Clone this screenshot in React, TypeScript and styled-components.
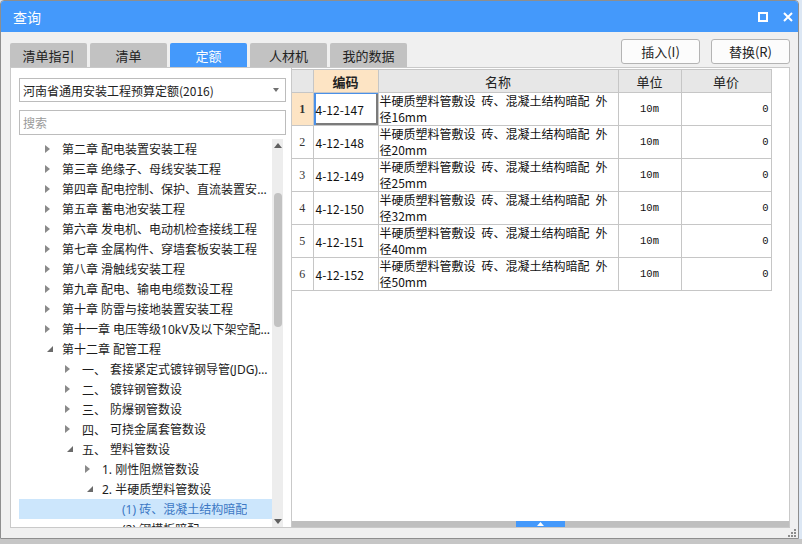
import React from 'react';
import styled, {createGlobalStyle, css} from 'styled-components';

type TreeItemType = {
    level: number
    text: string
    num?: string
    state?: 'open' | 'closed' | 'leaf'
    selected?: boolean
}

type RowType = {
    id: number
    code: string
    size: string
}

const treeData: TreeItemType[] = [
    {level: 0, text: '第二章 配电装置安装工程', state: 'closed'},
    {level: 0, text: '第三章 绝缘子、母线安装工程', state: 'closed'},
    {level: 0, text: '第四章 配电控制、保护、直流装置安装工程', state: 'closed'},
    {level: 0, text: '第五章 蓄电池安装工程', state: 'closed'},
    {level: 0, text: '第六章 发电机、电动机检查接线工程', state: 'closed'},
    {level: 0, text: '第七章 金属构件、穿墙套板安装工程', state: 'closed'},
    {level: 0, text: '第八章 滑触线安装工程', state: 'closed'},
    {level: 0, text: '第九章 配电、输电电缆数设工程', state: 'closed'},
    {level: 0, text: '第十章 防雷与接地装置安装工程', state: 'closed'},
    {level: 0, text: '第十一章 电压等级10kV及以下架空配电线路工程', state: 'closed'},
    {level: 0, text: '第十二章 配管工程', state: 'open'},
    {level: 1, num: '一、', text: '套接紧定式镀锌钢导管(JDG)数设', state: 'closed'},
    {level: 1, num: '二、', text: '镀锌钢管数设', state: 'closed'},
    {level: 1, num: '三、', text: '防爆钢管数设', state: 'closed'},
    {level: 1, num: '四、', text: '可挠金属套管数设', state: 'closed'},
    {level: 1, num: '五、', text: '塑料管数设', state: 'open'},
    {level: 2, text: '1. 刚性阻燃管数设', state: 'closed'},
    {level: 2, text: '2. 半硬质塑料管数设', state: 'open'},
    {level: 3, text: '(1) 砖、混凝土结构暗配', state: 'leaf', selected: true},
    {level: 3, text: '(2) 钢模板暗配', state: 'leaf'},
]

const rows: RowType[] = [
    {id: 1, code: '4-12-147', size: '16mm'},
    {id: 2, code: '4-12-148', size: '20mm'},
    {id: 3, code: '4-12-149', size: '25mm'},
    {id: 4, code: '4-12-150', size: '32mm'},
    {id: 5, code: '4-12-151', size: '40mm'},
    {id: 6, code: '4-12-152', size: '50mm'},
]

const tabs = ['清单指引', '清单', '定额', '人材机', '我的数据']

const TreeIcon = ({state}: { state?: TreeItemType['state'] }) => {
    if (state === 'open') {
        return (
            <svg width="6" height="6" viewBox="0 0 6 6" style={{marginLeft: 2}}>
                <polygon points="6,0 6,6 0,6" fill="#6b6b6b"/>
            </svg>
        )
    }
    if (state === 'closed') {
        return (
            <svg width="5" height="8" viewBox="0 0 5 8">
                <polygon points="0,0 5,4 0,8" fill="#8a8a8a"/>
            </svg>
        )
    }
    return null
}

export default function App() {
    return (
        <Page>
            <GlobalStyle/>
            <Window>
                <TitleBar>
                    <span>查询</span>
                    <TitleIcons>
                        <MaxIcon/>
                        <svg width="10" height="10" viewBox="0 0 10 10">
                            <path d="M1 1 L9 9 M9 1 L1 9" stroke="#fff" strokeWidth="2"/>
                        </svg>
                    </TitleIcons>
                </TitleBar>

                <Toolbar>
                    <Tabs>
                        {tabs.map(t => <Tab key={t} active={t === '定额'}>{t}</Tab>)}
                    </Tabs>
                    <Buttons>
                        <Button>插入(I)</Button>
                        <Button>替换(R)</Button>
                    </Buttons>
                </Toolbar>

                <Content>
                    <LeftPanel>
                        <Select>
                            <span>河南省通用安装工程预算定额(2016)</span>
                            <svg width="6" height="4" viewBox="0 0 6 4">
                                <polygon points="0,0 6,0 3,4" fill="#707070"/>
                            </svg>
                        </Select>
                        <Search placeholder="搜索"/>
                        <TreeWrap>
                            <TreeList>
                                {treeData.map((el, i) => (
                                    <TreeRow key={i} level={el.level} selected={!!el.selected}>
                                        <IconBox><TreeIcon state={el.state}/></IconBox>
                                        {el.num && <Num>{el.num}</Num>}
                                        <TreeText>{el.text}</TreeText>
                                    </TreeRow>
                                ))}
                            </TreeList>
                            <VScroll>
                                <ArrowBox>
                                    <svg width="8" height="5" viewBox="0 0 8 5">
                                        <polygon points="0,5 8,5 4,0" fill="#606060"/>
                                    </svg>
                                </ArrowBox>
                                <Track>
                                    <Thumb/>
                                </Track>
                                <ArrowBox>
                                    <svg width="8" height="5" viewBox="0 0 8 5">
                                        <polygon points="0,0 8,0 4,5" fill="#606060"/>
                                    </svg>
                                </ArrowBox>
                            </VScroll>
                        </TreeWrap>
                    </LeftPanel>

                    <RightPanel>
                        <TableArea>
                            <Grid>
                                <colgroup>
                                    <col style={{width: 21}}/>
                                    <col style={{width: 65}}/>
                                    <col style={{width: 240}}/>
                                    <col style={{width: 63}}/>
                                    <col style={{width: 90}}/>
                                </colgroup>
                                <thead>
                                <tr>
                                    <Th/>
                                    <Th hl>编码</Th>
                                    <Th>名称</Th>
                                    <Th>单位</Th>
                                    <Th>单价</Th>
                                </tr>
                                </thead>
                                <tbody>
                                {rows.map(el => (
                                    <tr key={el.id}>
                                        <NumTd hl={el.id === 1}>{el.id}</NumTd>
                                        <CodeTd focus={el.id === 1}>{el.code}</CodeTd>
                                        <NameTd>半硬质塑料管敷设{'\u2002'}砖、混凝土结构暗配{'\u2002'}外径{el.size}</NameTd>
                                        <Td align="center">10m</Td>
                                        <Td align="right">0</Td>
                                    </tr>
                                ))}
                                </tbody>
                            </Grid>
                        </TableArea>
                        <HScroll>
                            <Handle>
                                <svg width="7" height="4" viewBox="0 0 7 4">
                                    <polygon points="0,4 7,4 3.5,0" fill="#fff"/>
                                </svg>
                            </Handle>
                        </HScroll>
                    </RightPanel>
                </Content>

                <Footer>
                    <svg width="8" height="8" viewBox="0 0 8 8">
                        <rect x="6" y="0" width="2" height="2" fill="#8c8c8c"/>
                        <rect x="3" y="3" width="2" height="2" fill="#8c8c8c"/>
                        <rect x="6" y="3" width="2" height="2" fill="#8c8c8c"/>
                        <rect x="0" y="6" width="2" height="2" fill="#8c8c8c"/>
                        <rect x="3" y="6" width="2" height="2" fill="#8c8c8c"/>
                        <rect x="6" y="6" width="2" height="2" fill="#8c8c8c"/>
                    </svg>
                </Footer>
            </Window>
            <BottomStrip/>
        </Page>
    );
}

const GlobalStyle = createGlobalStyle`
  html, body {
    margin: 0;
    padding: 0;
    overflow: hidden;
  }

  body {
    background: #dce7f4;
    font-family: "Noto Sans CJK SC", "Noto Sans", sans-serif;
    font-size: 12px;
    color: #222;
  }
`

const Page = styled.div`
  width: 802px;
  height: 544px;
  display: flex;
  flex-direction: column;
`

const Window = styled.div`
  box-sizing: border-box;
  width: 799px;
  height: 539px;
  border: 1px solid #8e8e8e;
  border-radius: 4px 4px 0 0;
  background: #f0f0f0;
  display: flex;
  flex-direction: column;
  overflow: hidden;
`

const BottomStrip = styled.div`
  flex: 1;
  background: #c6c6c6;
`

const TitleBar = styled.div`
  height: 31px;
  flex-shrink: 0;
  display: flex;
  align-items: center;
  justify-content: space-between;
  padding: 0 5px 0 12px;
  background: #4499fb;
  color: #fff;
  font-size: 14px;
`

const TitleIcons = styled.div`
  display: flex;
  align-items: center;
  gap: 15px;
`

const MaxIcon = styled.div`
  box-sizing: border-box;
  width: 10px;
  height: 10px;
  border: 2px solid #fff;
`

const Toolbar = styled.div`
  height: 35px;
  flex-shrink: 0;
  display: flex;
  align-items: flex-end;
  justify-content: space-between;
  padding: 0 8px 0 9px;
`

const Tabs = styled.div`
  display: flex;
  gap: 3px;
`

const Tab = styled.div<{ active: boolean }>`
  width: 77px;
  height: 24px;
  display: flex;
  align-items: center;
  justify-content: center;
  border-radius: 2px 2px 0 0;
  background: #c2c2c2;
  color: #222;
  font-size: 13px;
  ${props => props.active && css`
    background: #4499fb;
    color: #fff;
  `}
`

const Buttons = styled.div`
  display: flex;
  gap: 11px;
  padding-bottom: 3px;
`

const Button = styled.div`
  box-sizing: border-box;
  width: 79px;
  height: 25px;
  display: flex;
  align-items: center;
  justify-content: center;
  background: #fcfcfc;
  border: 1px solid #b4b4b4;
  border-radius: 3px;
  font-size: 13px;
  color: #222;
`

const Content = styled.div`
  height: 461px;
  flex-shrink: 0;
  box-sizing: border-box;
  margin: 0 8px 0 9px;
  border: 1px solid #c9c9c9;
  background: #fff;
  display: flex;
`

const LeftPanel = styled.div`
  width: 281px;
  flex-shrink: 0;
  border-right: 1px solid #c9c9c9;
  padding: 10px 5px 0 8px;
  box-sizing: border-box;
  display: flex;
  flex-direction: column;
  overflow: hidden;
`

const Select = styled.div`
  box-sizing: border-box;
  height: 24px;
  flex-shrink: 0;
  border: 1px solid #bcbcbc;
  display: flex;
  align-items: center;
  justify-content: space-between;
  padding: 0 6px 0 3px;
  font-size: 12px;
  color: #222;
`

const Search = styled.input`
  box-sizing: border-box;
  height: 25px;
  flex-shrink: 0;
  margin-top: 8px;
  border: 1px solid #bcbcbc;
  padding: 0 3px;
  font-family: "Noto Sans CJK SC", sans-serif;
  font-size: 12px;
  outline: none;

  &::placeholder {
    color: #9a9a9a;
  }
`

const TreeWrap = styled.div`
  flex: 1;
  margin: 4px 3px 0 0;
  display: flex;
  min-height: 0;
`

const TreeList = styled.div`
  flex: 1;
  overflow: hidden;
  min-width: 0;
`

const TreeRow = styled.div<{ level: number; selected: boolean }>`
  height: 20px;
  display: flex;
  align-items: center;
  padding-left: ${props => 26 + props.level * 20}px;
  padding-right: 2px;
  color: #1c1c1c;
  ${props => props.selected && css`
    background: #cce6fc;
    color: #3c78c4;
  `}
`

const IconBox = styled.div`
  width: 17px;
  flex-shrink: 0;
  display: flex;
  align-items: center;
`

const Num = styled.span`
  width: 28px;
  flex-shrink: 0;
`

const TreeText = styled.span`
  font-family: "Noto Sans", "Noto Sans CJK SC", sans-serif;
  white-space: nowrap;
  overflow: hidden;
  text-overflow: ellipsis;
`

const VScroll = styled.div`
  width: 11px;
  flex-shrink: 0;
  display: flex;
  flex-direction: column;
  background: #ededed;
`

const ArrowBox = styled.div`
  height: 12px;
  display: flex;
  align-items: center;
  justify-content: center;
`

const Track = styled.div`
  flex: 1;
  padding-top: 42px;
  display: flex;
  justify-content: center;
`

const Thumb = styled.div`
  width: 8px;
  height: 134px;
  border-radius: 4px;
  background: #c2c2c2;
`

const RightPanel = styled.div`
  flex: 1;
  display: flex;
  flex-direction: column;
  min-width: 0;
`

const TableArea = styled.div`
  flex: 1;
  padding-top: 1px;
  overflow: hidden;
`

const Grid = styled.table`
  border-collapse: collapse;
  table-layout: fixed;
  width: 479px;
  border-top: 1px solid #c6c6c6;
`

const cellBase = css`
  border: 1px solid #c6c6c6;
  padding: 0;
  overflow: hidden;
`

const Th = styled.th<{ hl?: boolean }>`
  ${cellBase};
  height: 22px;
  background: #e7e7e7;
  font-weight: normal;
  font-size: 13px;
  color: #222;
  border-top: none;
  border-left: none;
  ${props => props.hl && css`
    background: #fde4c4;
    font-weight: bold;
  `}
`

const Td = styled.td<{ align?: 'left' | 'center' | 'right' }>`
  ${cellBase};
  height: 32px;
  padding: 0 2px;
  text-align: ${props => props.align || 'left'};
  font-family: "Liberation Mono", monospace;
  font-size: 10.5px;
  color: #111;
`

const CodeTd = styled.td<{ focus: boolean }>`
  ${cellBase};
  height: 32px;
  padding: 0 2px;
  font-size: 12px;
  color: #111;
  ${props => props.focus && css`
    box-shadow: inset 2px 1px 0 #4a90e8, inset -2px -2px 0 #7b7b7b;
  `}
`

const NumTd = styled.td<{ hl: boolean }>`
  ${cellBase};
  height: 32px;
  text-align: center;
  font-family: "Liberation Serif", serif;
  font-size: 12px;
  color: #333;
  border-left: none;
  ${props => props.hl && css`
    background: #fde4c4;
    font-weight: bold;
  `}
`

const NameTd = styled.td`
  ${cellBase};
  height: 32px;
  padding: 0 6px 0 1px;
  line-height: 16px;
  font-size: 12px;
  color: #111;
`

const HScroll = styled.div`
  height: 6px;
  flex-shrink: 0;
  background: #bfbfbf;
  display: flex;
  justify-content: center;
`

const Handle = styled.div`
  width: 49px;
  background: #4499fb;
  display: flex;
  align-items: center;
  justify-content: center;
`

const Footer = styled.div`
  flex: 1;
  display: flex;
  justify-content: flex-end;
  align-items: center;
  padding-right: 2px;
`
